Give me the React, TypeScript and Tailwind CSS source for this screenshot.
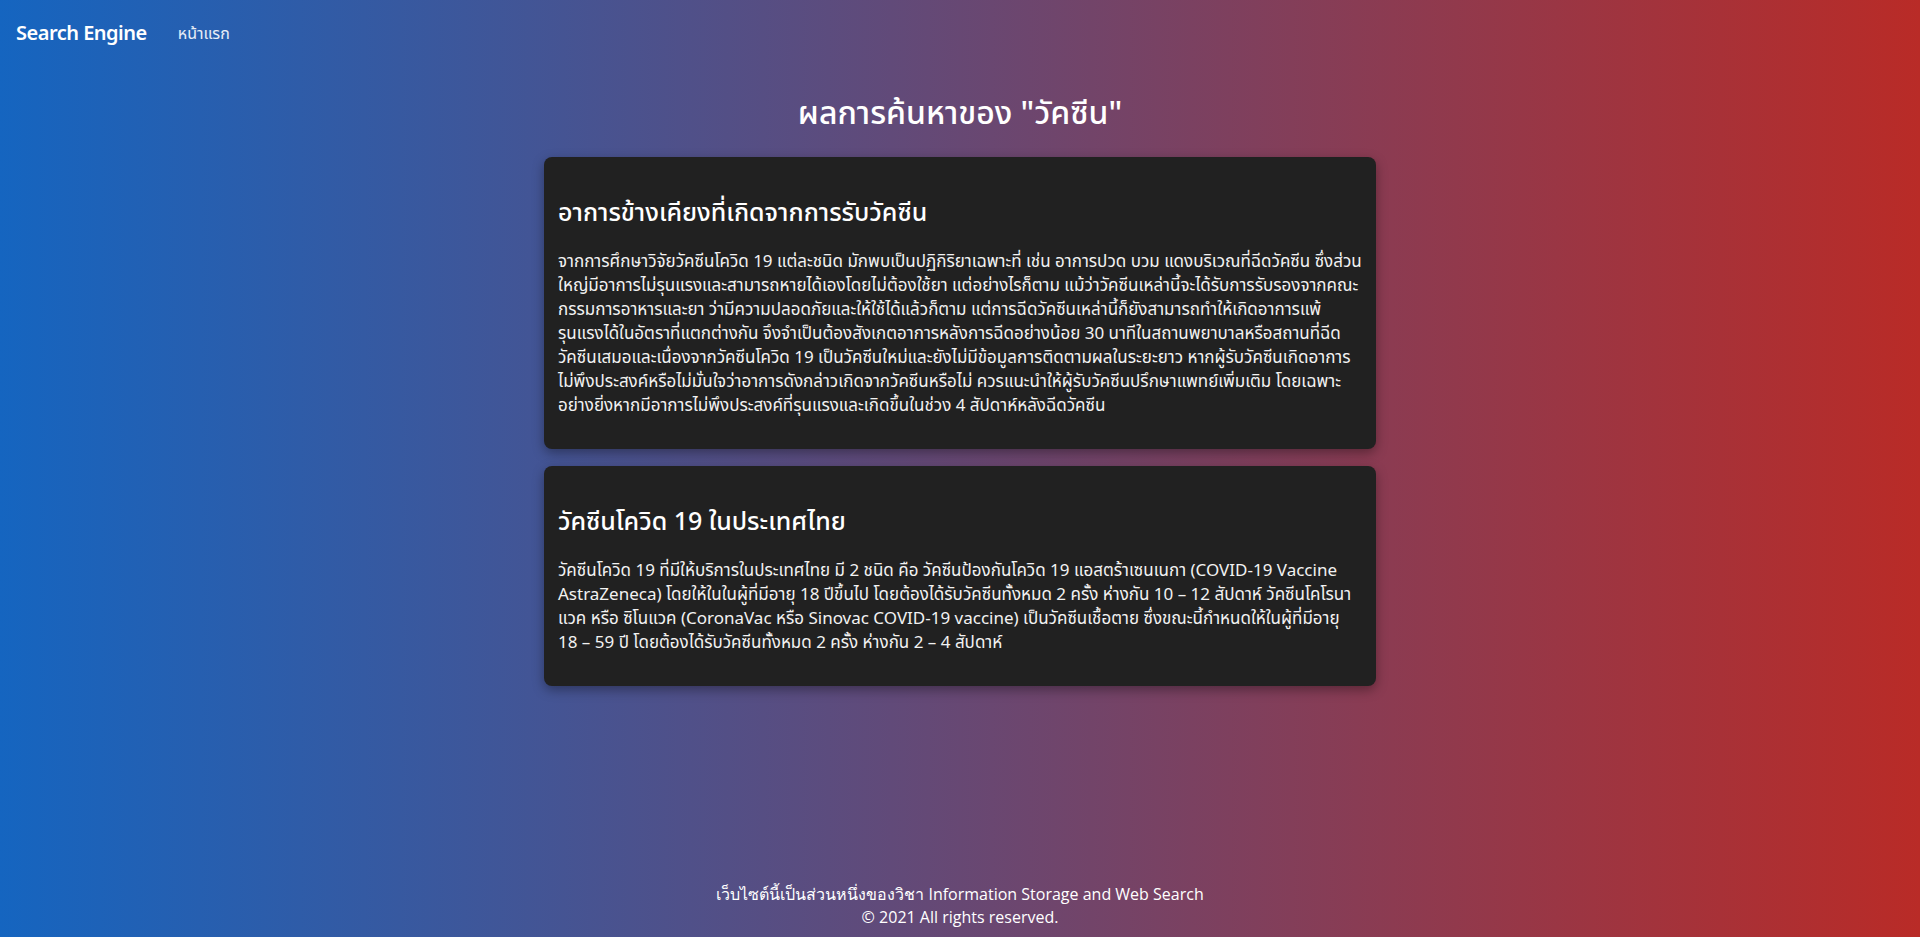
import React from 'react'

interface Result {
    title: string;
    body: string;
}

const results: Result[] = [
    {
        title: 'อาการข้างเคียงที่เกิดจากการรับวัคซีน',
        body: 'จากการศึกษาวิจัยวัคซีนโควิด 19 แต่ละชนิด มักพบเป็นปฏิกิริยาเฉพาะที่ เช่น อาการปวด บวม แดงบริเวณที่ฉีดวัคซีน ซึ่งส่วนใหญ่มีอาการไม่รุนแรงและสามารถหายได้เองโดยไม่ต้องใช้ยา แต่อย่างไรก็ตาม แม้ว่าวัคซีนเหล่านี้จะได้รับการรับรองจากคณะกรรมการอาหารและยา ว่ามีความปลอดภัยและให้ใช้ได้แล้วก็ตาม แต่การฉีดวัคซีนเหล่านี้ก็ยังสามารถทำให้เกิดอาการแพ้รุนแรงได้ในอัตราที่แตกต่างกัน จึงจำเป็นต้องสังเกตอาการหลังการฉีดอย่างน้อย 30 นาทีในสถานพยาบาลหรือสถานที่ฉีดวัคซีนเสมอและเนื่องจากวัคซีนโควิด 19 เป็นวัคซีนใหม่และยังไม่มีข้อมูลการติดตามผลในระยะยาว หากผู้รับวัคซีนเกิดอาการไม่พึงประสงค์หรือไม่มั่นใจว่าอาการดังกล่าวเกิดจากวัคซีนหรือไม่ ควรแนะนำให้ผู้รับวัคซีนปรึกษาแพทย์เพิ่มเติม โดยเฉพาะอย่างยิ่งหากมีอาการไม่พึงประสงค์ที่รุนแรงและเกิดขึ้นในช่วง 4 สัปดาห์หลังฉีดวัคซีน',
    },
    {
        title: 'วัคซีนโควิด 19 ในประเทศไทย',
        body: 'วัคซีนโควิด 19 ที่มีให้บริการในประเทศไทย มี 2 ชนิด คือ วัคซีนป้องกันโควิด 19 แอสตร้าเซนเนกา (COVID-19 Vaccine AstraZeneca) โดยให้ในในผู้ที่มีอายุ 18 ปีขึ้นไป โดยต้องได้รับวัคซีนทั้งหมด 2 ครั้ง ห่างกัน 10 – 12 สัปดาห์ วัคซีนโคโรนาแวค หรือ ซิโนแวค (CoronaVac หรือ Sinovac COVID-19 vaccine) เป็นวัคซีนเชื้อตาย ซึ่งขณะนี้กำหนดให้ในผู้ที่มีอายุ 18 – 59 ปี โดยต้องได้รับวัคซีนทั้งหมด 2 ครั้ง ห่างกัน 2 – 4 สัปดาห์',
    },
]

function ResultCard({ title, body }: Result) {
    return (
        <div className="bg-[#212121] rounded-lg shadow-[0_4px_12px_rgba(0,0,0,0.35)] px-[14px] pt-10 pb-8 mb-[17px]">
            <h2 className="text-[25px] leading-[29px] font-medium text-white">{title}</h2>
            <p className="mt-[23px] text-[17px] leading-6 text-[#f2f2f2]">{body}</p>
        </div>
    )
}

export default function App() {
    return (
        <div className="min-h-screen flex flex-col bg-[linear-gradient(to_right,#1565c0,#b92b27)] font-['Noto_Sans','Noto_Sans_Thai','Liberation_Sans',sans-serif] text-white">
            <nav className="h-[66px] flex items-center px-4">
                <span className="text-[20px] font-semibold tracking-tight">Search Engine</span>
                <a href="#" className="ml-[31px] text-[16px] text-white/90">หน้าแรก</a>
            </nav>

            <main className="w-[832px] mx-auto">
                <h1 className="mt-[27px] mb-[26px] text-center text-[32px] leading-[38px] font-medium">
                    ผลการค้นหาของ "วัคซีน"
                </h1>
                {results.map((r, i) => (
                    <ResultCard key={i} title={r.title} body={r.body} />
                ))}
            </main>

            <footer className="mt-auto pb-2 text-center text-[16px] leading-[23px] font-['Open_Sans','Noto_Sans',sans-serif]">
                <p>เว็บไซต์นี้เป็นส่วนหนึ่งของวิชา Information Storage and Web Search</p>
                <p>© 2021 All rights reserved.</p>
            </footer>
        </div>
    )
}
